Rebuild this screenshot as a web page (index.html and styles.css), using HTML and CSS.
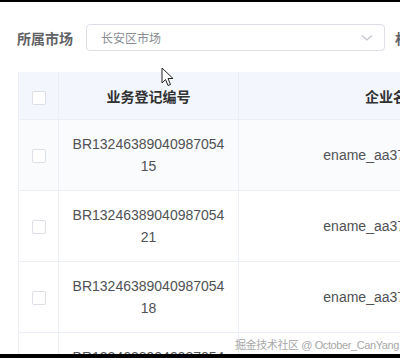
FILE: index.html
```html
<!DOCTYPE html>
<html lang="zh-CN">
<head>
    <meta name="viewport" content="width=device-width, initial-scale=1.0">
    <link rel="stylesheet" href="styles.css">
    <title>业务登记</title>
</head>

<body>
    <div class="top-bar"></div>

    <div class="filter">
        <span class="filter-label">所属市场</span>
        <div class="select">
            <span class="select-text">长安区市场</span>
            <svg class="select-arrow" width="12" height="8" viewBox="0 0 12 8">
                <path d="M1 1.5 L6 6 L11 1.5" fill="none" stroke="#c0c4cc" stroke-width="1.3"/>
            </svg>
        </div>
        <span class="filter-label">村庄名称</span>
    </div>

    <table class="list">
        <thead>
            <tr>
                <th class="col-check"><span class="checkbox"></span></th>
                <th class="col-no">业务登记编号</th>
                <th class="col-name">企业名称</th>
            </tr>
        </thead>
        <tbody>
            <tr class="hover">
                <td class="col-check"><span class="checkbox"></span></td>
                <td class="col-no">BR1324638904098705415</td>
                <td class="col-name">ename_aa37f1c2e8b9</td>
            </tr>
            <tr>
                <td class="col-check"><span class="checkbox"></span></td>
                <td class="col-no">BR1324638904098705421</td>
                <td class="col-name">ename_aa37f1c2e8b9</td>
            </tr>
            <tr>
                <td class="col-check"><span class="checkbox"></span></td>
                <td class="col-no">BR1324638904098705418</td>
                <td class="col-name">ename_aa37f1c2e8b9</td>
            </tr>
            <tr>
                <td class="col-check"><span class="checkbox"></span></td>
                <td class="col-no">BR1324638904098705420</td>
                <td class="col-name">ename_aa37f1c2e8b9</td>
            </tr>
        </tbody>
    </table>

    <svg class="cursor" width="14" height="20" viewBox="0 0 14 20">
        <path d="M1 1 L1 16 L4.5 12.5 L7 18.5 L9.5 17.5 L7 11.5 L12 11.5 Z" fill="#fff" stroke="#222" stroke-width="1" stroke-linejoin="round"/>
    </svg>

    <div class="watermark">掘金技术社区 @ October_CanYang</div>
    <div class="bottom-bar"></div>
</body>

</html>
```

FILE: styles.css
```css
body {
    font-family: "Liberation Sans", "Noto Sans CJK SC", sans-serif;
    margin: 0;
    padding: 0;
    background: #fff;
    width: 400px;
    height: 358px;
    overflow: hidden;
    position: relative;
}

.top-bar {
    height: 2px;
    background: #000;
}

.bottom-bar {
    position: absolute;
    left: 0;
    right: 0;
    bottom: 0;
    height: 4px;
    background: #000;
}

.filter {
    display: flex;
    align-items: center;
    padding: 22px 0 0 17px;
    white-space: nowrap;
}

.filter-label {
    font-family: "Noto Sans CJK SC", sans-serif;
    font-size: 14px;
    font-weight: bold;
    color: #606266;
}

.select {
    display: flex;
    align-items: center;
    justify-content: space-between;
    box-sizing: border-box;
    width: 299px;
    height: 27px;
    margin: 0 10px 0 13px;
    padding: 0 11px 0 14px;
    border: 1px solid #dcdfe6;
    border-radius: 4px;
    flex-shrink: 0;
}

.select-text {
    font-family: "Noto Sans CJK SC", sans-serif;
    font-size: 12px;
    color: #8a8d93;
}

.list {
    border-collapse: collapse;
    margin: 21px 0 0 18px;
    table-layout: fixed;
    width: 528px;
    border-left: 1px solid #ebeef5;
}

th,
td {
    border-bottom: 1px solid #ebeef5;
    border-right: 1px solid #ebeef5;
    text-align: center;
    padding: 0 10px;
}

th {
    height: 47px;
    background: #f3f6fc;
    font-family: "Noto Sans CJK SC", sans-serif;
    font-size: 14px;
    font-weight: bold;
    color: #303133;
}

td {
    height: 70px;
    font-size: 14px;
    line-height: 22px;
    color: #505255;
}

.hover td {
    background: #fafbfd;
}

.col-check {
    width: 39px;
    padding: 0;
}

.col-no {
    width: 159px;
    word-break: break-all;
}

.col-name {
    width: 288px;
    border-right: none;
}

.checkbox {
    display: inline-block;
    width: 12px;
    height: 12px;
    border: 1px solid #dcdfe6;
    border-radius: 2px;
    background: #fff;
    vertical-align: middle;
}

.cursor {
    position: absolute;
    left: 161px;
    top: 67px;
}

.watermark {
    position: absolute;
    left: 235px;
    top: 336px;
    font-family: "Liberation Sans", "Noto Sans CJK SC", sans-serif;
    font-size: 11px;
    letter-spacing: -0.4px;
    color: #a8a8a8;
    white-space: nowrap;
}
```
